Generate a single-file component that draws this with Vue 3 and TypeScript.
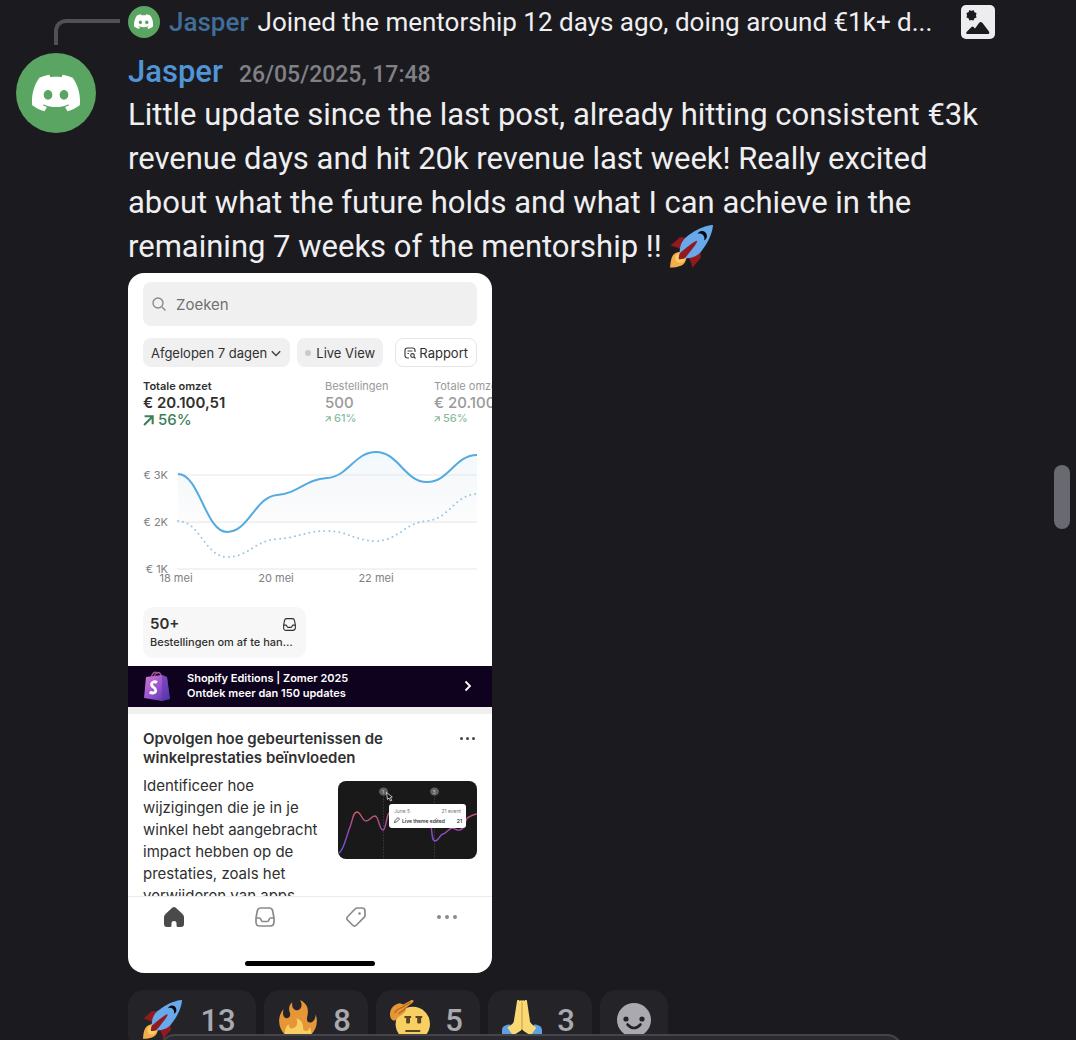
<script setup lang="ts">
interface Point { x: number; y: number; slope: number }
interface Metric { label: string; value: string; change: string; active: boolean }
interface Reaction { emoji: string; count: number; label: string }

const metrics: Metric[] = [
  { label: 'Totale omzet', value: '€ 20.100,51', change: '56%', active: true },
  { label: 'Bestellingen', value: '500', change: '61%', active: false },
  { label: 'Totale omzet', value: '€ 20.100,51', change: '56%', active: false },
]

const reactions: Reaction[] = [
  { emoji: 'rocket', count: 13, label: 'Rocket' },
  { emoji: 'fire', count: 8, label: 'Fire' },
  { emoji: 'salute', count: 5, label: 'Salute' },
  { emoji: 'pray', count: 3, label: 'Pray' },
]

const gridLines = [
  { y: 35, label: '€ 3K' },
  { y: 82, label: '€ 2K' },
  { y: 129, label: '€ 1K' },
]
const dates = [
  { x: 33, label: '18 mei' },
  { x: 133, label: '20 mei' },
  { x: 233, label: '22 mei' },
]

const current: Point[] = [
  { x: 35, y: 34, slope: 0 },
  { x: 84, y: 92, slope: 0 },
  { x: 134, y: 55, slope: -0.08 },
  { x: 184, y: 38, slope: -0.06 },
  { x: 233, y: 12, slope: 0 },
  { x: 284, y: 42, slope: 0 },
  { x: 334, y: 15, slope: 0 },
]
const previous: Point[] = [
  { x: 35, y: 81, slope: 0 },
  { x: 84, y: 117, slope: 0 },
  { x: 134, y: 99, slope: -0.06 },
  { x: 184, y: 91, slope: 0 },
  { x: 233, y: 101, slope: 0 },
  { x: 284, y: 81, slope: -0.06 },
  { x: 334, y: 54, slope: 0 },
]

function curve(points: Point[]): string {
  return points
    .map((p, i) => {
      if (i === 0) return `M${p.x} ${p.y}`
      const q = points[i - 1]
      const d = (p.x - q.x) * 0.44
      return `C${q.x + d} ${q.y + q.slope * d} ${p.x - d} ${p.y - p.slope * d} ${p.x} ${p.y}`
    })
    .join(' ')
}

const currentPath = curve(current)
const previousPath = curve(previous)
</script>

<template>
  <main class="chat">
    <svg class="symbols" aria-hidden="true">
      <symbol id="discord" viewBox="0 0 24 24">
        <path d="M20.317 4.3698a19.7913 19.7913 0 00-4.8851-1.5152.0741.0741 0 00-.0785.0371c-.211.3753-.4447.8648-.6083 1.2495-1.8447-.2762-3.68-.2762-5.4868 0-.1636-.3933-.4058-.8742-.6177-1.2495a.077.077 0 00-.0785-.037 19.7363 19.7363 0 00-4.8852 1.515.0699.0699 0 00-.0321.0277C.5334 9.0458-.319 13.5799.0992 18.0578a.0824.0824 0 00.0312.0561c2.0528 1.5076 4.0413 2.4228 5.9929 3.0294a.0777.0777 0 00.0842-.0276c.4616-.6304.8731-1.2952 1.226-1.9942a.076.076 0 00-.0416-.1057c-.6528-.2476-1.2743-.5495-1.8722-.8923a.077.077 0 01-.0076-.1277c.1258-.0943.2517-.1923.3718-.2914a.0743.0743 0 01.0776-.0105c3.9278 1.7933 8.18 1.7933 12.0614 0a.0739.0739 0 01.0785.0095c.1202.099.246.1981.3728.2924a.077.077 0 01-.0066.1276 12.2986 12.2986 0 01-1.873.8914.0766.0766 0 00-.0407.1067c.3604.698.7719 1.3628 1.225 1.9932a.076.076 0 00.0842.0286c1.961-.6067 3.9495-1.5219 6.0023-3.0294a.077.077 0 00.0313-.0552c.5004-5.177-.8382-9.6739-3.5485-13.6604a.061.061 0 00-.0312-.0286zM8.02 15.3312c-1.1825 0-2.1569-1.0857-2.1569-2.419 0-1.3332.9555-2.4189 2.157-2.4189 1.2108 0 2.1757 1.0952 2.1568 2.419 0 1.3332-.9555 2.4189-2.1569 2.4189zm7.9748 0c-1.1825 0-2.1569-1.0857-2.1569-2.419 0-1.3332.9554-2.4189 2.1569-2.4189 1.2108 0 2.1757 1.0952 2.1568 2.419 0 1.3332-.946 2.4189-2.1568 2.4189Z" />
      </symbol>
      <symbol id="rocket" viewBox="0 0 36 36">
        <path fill="#92191f" d="M1 17l8-7 16 1 1 16-7 8s.001-5.999-6-12-12-6-12-6z" />
        <path fill="#f2ae4b" d="M.973 35s-.036-7.979 2.985-11S15 21.187 15 21.187 14.999 29 11.999 32c-3 3-11.026 3-11.026 3z" />
        <circle fill="#f8cd66" cx="9" cy="27" r="4" />
        <path fill="#67a9ea" d="M35.999 0s-10 0-22 10c-6 5-6 14-4 16s11 2 16-4c10-12 10-22 10-22z" />
        <path fill="#08080a" d="M26.999 5c-1.623 0-3.013.971-3.641 2.36.502-.227 1.055-.36 1.641-.36 2.209 0 4 1.791 4 4 0 .586-.133 1.139-.359 1.64 1.389-.627 2.359-2.017 2.359-3.64 0-2.209-1.791-4-4-4z" />
        <path fill="#92191f" d="M8 28s0-4 1-5 13.001-10.999 14-10-9.001 13-10.001 14S8 28 8 28z" />
      </symbol>
      <symbol id="fire" viewBox="0 0 36 36">
        <path fill="#e79637" d="M35 19c0-2.062-.367-4.039-1.04-5.868-.46 5.389-3.333 8.157-6.335 6.868-2.812-1.208-.917-5.917-.777-8.164.236-3.809-.012-8.169-6.931-11.794 2.875 5.5.333 8.917-2.333 9.125-2.958.231-5.667-2.542-4.667-7.042-3.238 2.386-3.332 6.402-2.333 9 1.042 2.708-.042 4.958-2.583 5.208-2.84.28-4.418-3.041-2.963-8.333C2.52 10.965 1 14.805 1 19c0 9.389 7.611 17 17 17s17-7.611 17-17z" />
        <path fill="#f7cf63" d="M28.394 23.999c.148 3.084-2.561 4.293-4.019 3.709-2.106-.843-1.541-2.291-2.083-5.291s-2.625-5.083-5.708-6c2.25 6.333-1.247 8.667-3.08 9.084-1.872.426-3.753-.001-3.968-4.007C7.352 23.668 6 26.676 6 30c0 .368.023.73.055 1.09C9.125 34.124 13.342 36 18 36s8.875-1.876 11.945-4.91c.032-.36.055-.722.055-1.09 0-2.187-.584-4.236-1.606-6.001z" />
      </symbol>
      <symbol id="salute" viewBox="0 0 36 36">
        <circle fill="#f7cf63" cx="20.500" cy="21.500" r="15.500" />
        <path fill="#5a4520" d="M13 14.500h6v1.700h-1v4.300c0 1-3.500 1-3.500 0v-4.300H13zM23 14.500h6v1.700h-1v4.300c0 1-3.500 1-3.500 0v-4.300H23z" />
        <path d="M14.500 28h12" stroke="#5a4520" stroke-width="1.800" stroke-linecap="round" />
        <path fill="#e79637" d="M0 13C0 8 3 4 9 3l3 1 7-3.800c2-.8 2.800 1 1.500 2L15 6.500C14 13 9 13 5 18c-2 2-5-1-5-5z" />
        <path fill="none" stroke="#ad6322" stroke-width="1" stroke-linecap="round" d="M4.500 11.500C6 7 11 8 13 5l5-2.800M8 12c2-2 5-2 6-5" />
      </symbol>
      <symbol id="pray" viewBox="0 0 36 36">
        <path fill="#5f9fe3" d="M0 27c0-3 3-5 7-5l4 14H0zM36 27c0-3-3-5-7-5l-4 14h11z" />
        <path fill="#f9d973" d="M13.500 1c0-1.500 2-1.500 2.400 0 .5-1.200 2-1 2.100.3.100-1.300 1.600-1.500 2.100-.3.400-1.500 2.400-1.500 2.400 0 1 7 2 13 2.700 18.500 1 2.500 4 3.500 5.700 5.500l-5 7-8-5-8 5-5-7c1.700-2 4.700-3 5.700-5.500C11.500 14 12.500 8 13.500 1z" />
        <path fill="none" stroke="#d9a04a" stroke-width="1" d="M18 2v24" />
        <path fill="#26262b" d="M18 26c-1 2-4 4-4 8h8c0-4-3-6-4-8z" />
      </symbol>
      <symbol id="inbox" viewBox="0 0 20 20">
        <g fill="none" stroke="currentColor" stroke-width="1.700" stroke-linejoin="round">
          <path d="M5.500 1h9c2 0 2.800 1 3.200 3l1.300 7v4c0 3-1 4-4 4H5c-3 0-4-1-4-4v-4l1.300-7c.4-2 1.200-3 3.200-3z" />
          <path d="M1 11h3.500c1.500 0 1.500 3.500 3 3.500h5c1.500 0 1.500-3.500 3-3.500H19" />
        </g>
      </symbol>
      <symbol id="trend" viewBox="0 0 10 10">
        <path d="M1 9 8.500 1.500M1.500 1.200h7.300v7.300" fill="none" stroke="currentColor" stroke-width="1.900" />
      </symbol>
    </svg>

    <article class="message">
      <div class="reply">
        <span class="reply-spine"></span>
        <span class="avatar avatar-small"><svg><use href="#discord" /></svg></span>
        <a href="#author" class="author reply-author">Jasper</a>
        <span class="reply-text">Joined the mentorship 12 days ago, doing around €1k+ d...</span>
        <svg class="picture-icon" viewBox="0 0 34 34" role="img" aria-label="Image">
          <rect width="34" height="34" rx="5" fill="#ededef" />
          <path fill="#1b1b1f" d="M8.500 5l2 1 2-1 1 2.200 2 .8-.5 2.200.5 2.300-2 .8-1 2.200-2-.5-2 .5-1-2.200-2-.8.500-2.300-.5-2.200 2-.8zM6 29q-1.500-.5-.5-2l5-5q1-1 2 0l1.500 1.500L18 18q1.800-2 3.500 0L28 26.500q1 2-.5 2.500z" />
        </svg>
      </div>

      <div class="post">
        <span class="avatar avatar-large"><svg><use href="#discord" /></svg></span>
        <div class="content">
          <header class="heading">
            <a href="#author" class="author">Jasper</a>
            <time datetime="2025-05-26T17:48">26/05/2025, 17:48</time>
          </header>
          <p class="body">
            Little update since the last post, already hitting consistent €3k<br />
            revenue days and hit 20k revenue last week! Really excited<br />
            about what the future holds and what I can achieve in the<br />
            remaining 7 weeks of the mentorship !!
            <svg class="inline-emoji" role="img" aria-label="Rocket"><use href="#rocket" /></svg>
          </p>

          <section class="phone">
            <label class="search">
              <svg viewBox="0 0 14 14"><circle cx="6" cy="6" r="5" /><path d="m10 10 3.500 3.500" /></svg>
              <input type="search" placeholder="Zoeken" aria-label="Zoeken" />
            </label>

            <div class="filters">
              <button type="button" class="filter">
                Afgelopen 7 dagen
                <svg class="chevron" viewBox="0 0 10 10"><path d="m1.500 3.500 3.500 3.500 3.500-3.500" /></svg>
              </button>
              <button type="button" class="filter"><span class="dot"></span>Live View</button>
              <button type="button" class="filter report">
                <svg viewBox="0 0 12 12">
                  <path d="M5 11H3.500Q1 11 1 8.500v-5Q1 1 3.500 1h5Q11 1 11 3.500V5M3.500 4h5M3.500 6.500H5M10 10l1.500 1.500" />
                  <circle cx="8.500" cy="8.500" r="1.800" />
                </svg>
                Rapport
              </button>
            </div>

            <div class="metrics">
              <div v-for="(m, i) in metrics" :key="i" class="metric" :class="{ active: m.active }">
                <span class="metric-label">{{ m.label }}</span>
                <strong class="metric-value">{{ m.value }}</strong>
                <span class="metric-change"><svg><use href="#trend" /></svg>{{ m.change }}</span>
              </div>
            </div>

            <svg class="chart" viewBox="0 0 334 150" role="img" aria-label="Totale omzet per dag">
              <defs>
                <linearGradient id="area" gradientUnits="userSpaceOnUse" x1="0" y1="12" x2="0" y2="84">
                  <stop offset="0" stop-color="#f1f9fd" />
                  <stop offset="0.500" stop-color="#f8f9fb" />
                  <stop offset="1" stop-color="#fdfdfd" />
                </linearGradient>
              </defs>
              <path :d="`${currentPath} V84 H35 Z`" fill="url(#area)" />
              <g v-for="line in gridLines" :key="line.y">
                <line x1="34" x2="334" :y1="line.y" :y2="line.y" stroke="#e6e6e8" />
                <text x="25" :y="line.y + 4" text-anchor="end">{{ line.label }}</text>
              </g>
              <text v-for="d in dates" :key="d.x" :x="d.x" y="142" text-anchor="middle">{{ d.label }}</text>
              <path :d="previousPath" fill="none" stroke="#93c8e4" stroke-width="2" stroke-dasharray="0 5" stroke-linecap="round" />
              <path :d="currentPath" fill="none" stroke="#55aae0" stroke-width="2" />
            </svg>

            <a href="#orders" class="orders">
              <span class="orders-top"><strong>50+</strong><svg><use href="#inbox" /></svg></span>
              <span class="orders-text">Bestellingen om af te handelen</span>
            </a>

            <a href="#editions" class="banner">
              <svg class="bag" viewBox="0 0 26 30">
                <defs>
                  <linearGradient id="bagfill" x1="0" y1="0" x2="1" y2="1">
                    <stop offset="0" stop-color="#d279d2" />
                    <stop offset="0.500" stop-color="#9a55d0" />
                    <stop offset="1" stop-color="#4930a0" />
                  </linearGradient>
                </defs>
                <path d="M7 7C8 2 11 0 13 2c2-1 4 0 4 4M10 7c0-3 2-5 4-5" fill="none" stroke="#a05590" stroke-width="1.500" />
                <path d="m2 6 16-2 5 2 3 22-8 2L0 27z" fill="url(#bagfill)" />
                <path d="m18 4 5 2 3 22-8 2z" fill="#5636ad" opacity=".5" />
                <path d="M13 11.500c-2.500-1.500-5.500-.5-5.500 2 0 3 4.500 3 4.200 6-.2 2.800-3.500 3.200-6 1.500" fill="none" stroke="#fff" stroke-width="2.800" />
              </svg>
              <span class="banner-text">Shopify Editions | Zomer 2025<br />Ontdek meer dan 150 updates</span>
              <svg class="banner-arrow" viewBox="0 0 8 12"><path d="m1.500 1.500 4.500 4.500-4.500 4.500" /></svg>
            </a>

            <section class="news">
              <div class="news-head">
                <h2>Opvolgen hoe gebeurtenissen de winkelprestaties beïnvloeden</h2>
                <button type="button" class="more" aria-label="Meer"><i></i><i></i><i></i></button>
              </div>
              <div class="news-body">
                <p>Identificeer hoe wijzigingen die je in je winkel hebt aangebracht impact hebben op de prestaties, zoals het verwijderen van apps</p>
                <svg class="thumb" viewBox="0 0 139 78">
                  <defs>
                    <linearGradient id="line" gradientUnits="userSpaceOnUse" x1="0" y1="30" x2="0" y2="72">
                      <stop offset="0" stop-color="#d05a62" />
                      <stop offset="0.500" stop-color="#9a45b8" />
                      <stop offset="1" stop-color="#5560d8" />
                    </linearGradient>
                  </defs>
                  <rect width="139" height="78" rx="8" fill="#19191a" />
                  <path d="M45.500 14v64M96.500 14v64" stroke="#333" stroke-dasharray="2 1" />
                  <path d="M1 72C6 69 8 56 12 46c3-8 3-15 7-15 4 0 5 9 9 9s5-5 9-5 4 14 8 14c3 0 3-13 6-17" fill="none" stroke="url(#line)" stroke-width="1.400" />
                  <path d="M93 44c1 8 1 16 4 16 4 0 4-6 8-7s5-5 9-6c3 0 4 3 8 2 6-1 4-12 9-13 3-1 4-3 8-3" fill="none" stroke="url(#line)" stroke-width="1.400" />
                  <ellipse cx="45.500" cy="10.500" rx="4.500" ry="4" fill="#606062" />
                  <ellipse cx="96.500" cy="10.500" rx="4.500" ry="4" fill="#606062" />
                  <text x="45" y="13" fill="#ccc" font-size="5" text-anchor="middle">1</text>
                  <text x="96" y="13" fill="#ccc" font-size="5" text-anchor="middle">3</text>
                  <path d="m48.500 11.500 1 7 1.500-1.500 1.500 3 1.300-.7-1.500-2.800 2-.5z" fill="#111" stroke="#fff" stroke-width=".7" />
                  <rect x="51" y="23" width="77" height="24" rx="3" fill="#fff" />
                  <text x="56" y="32" fill="#777" font-size="5">June 5</text>
                  <text x="123" y="32" fill="#777" font-size="5" text-anchor="end">21 event</text>
                  <path d="m56.500 41.500.5-2 3-3 1.500 1.500-3 3z" fill="none" stroke="#333" stroke-width=".8" />
                  <text x="64" y="42" fill="#333" font-size="5" font-weight="600">Live theme edited</text>
                  <text x="124" y="42" fill="#333" font-size="5" font-weight="600" text-anchor="end">21</text>
                </svg>
              </div>
            </section>

            <nav class="tabs">
              <a href="#home" aria-label="Start" class="tab tab-active">
                <svg viewBox="0 0 20 20"><path fill="currentColor" d="M8.500.6q1.500-1.200 3 0L18 6.500q2 1.700 2 3.500v7q0 3-3 3h-3q-1.500 0-1.500-1.500V16q0-2-2.500-2t-2.500 2v2.500Q7.500 20 6 20H3q-3 0-3-3v-7q0-1.800 2-3.500z" /></svg>
              </a>
              <a href="#inbox-tab" aria-label="Bestellingen" class="tab"><svg><use href="#inbox" /></svg></a>
              <a href="#products" aria-label="Producten" class="tab">
                <svg viewBox="0 0 20 20"><path fill="none" stroke="currentColor" stroke-width="1.700" d="M11.500 1H16q3 0 3 3v4.500q0 1.200-1 2L10.500 18q-2 2-4 0l-5-5q-1.500-1.800.3-3.500L9 2q1-1 2.500-1z" /><circle cx="13.500" cy="6.500" r="1.300" fill="currentColor" /></svg>
              </a>
              <a href="#more" aria-label="Meer" class="tab"><span class="more"><i></i><i></i><i></i></span></a>
            </nav>
            <span class="home-bar"></span>
          </section>

          <div class="reactions">
            <button v-for="r in reactions" :key="r.emoji" type="button" class="reaction" :aria-label="r.label">
              <svg><use :href="`#${r.emoji}`" /></svg>
              <span class="count" :class="{ wide: r.count > 9 }">{{ r.count }}</span>
            </button>
            <button type="button" class="reaction add" aria-label="Add reaction">
              <svg viewBox="0 0 34 34">
                <circle cx="17" cy="17" r="17" fill="#a9a9af" />
                <circle cx="9" cy="16" r="2.600" fill="#232327" /><circle cx="25" cy="16" r="2.600" fill="#232327" />
                <path d="M10.500 21.500q6.500 7 13 0" fill="none" stroke="#232327" stroke-width="2.600" stroke-linecap="round" />
              </svg>
            </button>
          </div>
        </div>
      </div>
    </article>

    <span class="scrollbar"></span>
    <div class="composer"></div>
  </main>
</template>

<style>
body {
  background: #1b1b1f;
}
</style>

<style scoped>
* {
  box-sizing: border-box;
}
.chat {
  position: relative;
  height: 100vh;
  overflow: hidden;
  background: #1b1b1f;
  color: #efeff1;
  font-family: Roboto, "Noto Sans", sans-serif;
}
.symbols {
  position: absolute;
  width: 0;
  height: 0;
}
a {
  color: inherit;
  text-decoration: none;
}
button {
  border: 0;
  margin: 0;
  font: inherit;
  color: inherit;
}
.message {
  padding: 0 81px 0 16px;
}
.reply {
  display: flex;
  align-items: center;
  height: 43px;
  padding-left: 38px;
  font-size: 26px;
}
.reply-spine {
  flex: none;
  align-self: flex-end;
  width: 66px;
  height: 26px;
  margin: 0 8px -2px 0;
  border: solid #505055;
  border-width: 4px 0 0 4px;
  border-top-left-radius: 12px;
}
.avatar {
  display: flex;
  flex: none;
  align-items: center;
  justify-content: center;
  border-radius: 50%;
  background: #5aa562;
}
.avatar svg {
  width: 60%;
  height: 60%;
  fill: #fff;
}
.avatar-small {
  width: 32px;
  height: 32px;
}
.avatar-large {
  width: 80px;
  height: 80px;
  margin-top: 10px;
}
.author {
  color: #5095d8;
  font-weight: 500;
}
.reply-author {
  margin: 0 9px;
  color: #416d99;
}
.reply-text {
  flex: 1;
  overflow: hidden;
  white-space: nowrap;
}
.picture-icon {
  flex: none;
  width: 34px;
  height: 34px;
  margin-left: 10px;
}
.post {
  display: flex;
  gap: 32px;
}
.content {
  flex: 1;
  min-width: 0;
}
.heading {
  display: flex;
  align-items: baseline;
  gap: 16px;
  height: 50px;
  font-size: 31px;
  line-height: 58px;
}
time {
  color: #808087;
  font-size: 23px;
  font-weight: 500;
}
.body {
  margin: 0;
  font-size: 31px;
  line-height: 44px;
  white-space: nowrap;
}
.inline-emoji {
  width: 44px;
  height: 44px;
  vertical-align: bottom;
}
.phone {
  max-width: 364px;
  margin-top: 4px;
  padding-top: 9px;
  overflow: hidden;
  border-radius: 16px;
  background: #fff;
  color: #303030;
  font-family: Inter, "Liberation Sans", sans-serif;
}
.search {
  display: flex;
  align-items: center;
  gap: 10px;
  height: 44px;
  margin: 0 15px;
  padding: 0 9px;
  border-radius: 8px;
  background: #f0f0f0;
}
.search svg {
  width: 14px;
  height: 14px;
  fill: none;
  stroke: #8a8a8a;
  stroke-width: 1.400;
}
.search input {
  flex: 1;
  min-width: 0;
  padding: 0;
  border: 0;
  outline: 0;
  background: none;
  font: 15px Inter, sans-serif;
}
.search input::placeholder {
  color: #707070;
  opacity: 1;
}
.filters {
  display: flex;
  gap: 7px;
  margin: 12px 15px 0;
}
.filter {
  display: flex;
  align-items: center;
  gap: 3px;
  height: 29px;
  padding: 0 8px;
  border-radius: 8px;
  background: #f0f0f0;
  font-size: 13px;
  white-space: nowrap;
}
.filter svg {
  width: 12px;
  height: 12px;
  fill: none;
  stroke: #404040;
  stroke-width: 1.200;
}
.dot {
  width: 6px;
  height: 6px;
  margin-right: 2px;
  border-radius: 50%;
  background: #cacaca;
}
.report {
  margin-left: auto;
  border: 1px solid #e6e6e6;
  background: #fff;
}
.metrics {
  display: grid;
  grid-template-columns: 182px 109px auto;
  margin: 12px 0 0 15px;
  overflow: hidden;
  white-space: nowrap;
}
.metric {
  display: flex;
  flex-direction: column;
  color: #999;
}
.metric-label {
  font-size: 11px;
  line-height: 15px;
}
.metric-value {
  font-size: 15px;
  font-weight: 500;
  line-height: 18px;
}
.metric-change {
  display: flex;
  align-items: center;
  gap: 3px;
  color: #8dbba3;
  font-size: 11px;
  font-weight: 500;
  line-height: 13px;
}
.metric-change svg {
  width: 6px;
  height: 6px;
}
.active {
  color: #303030;
}
.active .metric-label,
.active .metric-value {
  font-weight: 600;
}
.active .metric-change {
  gap: 4px;
  color: #3a8058;
  font-size: 15px;
  line-height: 16px;
}
.active .metric-change svg {
  width: 11px;
  height: 11px;
}
.chart {
  display: block;
  width: calc(100% - 30px);
  margin: 12px 15px 0;
}
.chart text {
  fill: #808086;
  font-size: 11px;
}
.orders {
  display: flex;
  flex-direction: column;
  width: 163px;
  margin: 17px 15px 8px;
  padding: 8px 8px 6px 7px;
  border-radius: 10px;
  background: #f7f7f7;
}
.orders-top {
  display: flex;
  align-items: center;
  justify-content: space-between;
  padding-right: 2px;
  font-size: 15px;
  line-height: 18px;
}
.orders-top strong {
  font-weight: 600;
}
.orders-top svg {
  width: 13px;
  height: 13px;
}
.orders-text {
  overflow: hidden;
  font-size: 11px;
  font-weight: 500;
  line-height: 19px;
  text-overflow: ellipsis;
  white-space: nowrap;
}
.banner {
  display: flex;
  align-items: center;
  height: 41px;
  padding: 0 20px 1px 16px;
  background: #0e021e;
  color: #fff;
  font-size: 11px;
  font-weight: 600;
  line-height: 15px;
}
.bag {
  width: 26px;
  height: 30px;
}
.banner-text {
  flex: 1;
  margin-left: 17px;
}
.banner-arrow {
  width: 8px;
  height: 12px;
  fill: none;
  stroke: #fff;
  stroke-width: 1.800;
}
.news {
  height: 189px;
  padding: 15px 15px 0;
  overflow: hidden;
  border-top: 7px solid #f0f0f0;
}
.news-head {
  display: flex;
  align-items: flex-start;
  justify-content: space-between;
}
h2 {
  max-width: 260px;
  margin: 0;
  font-size: 15px;
  font-weight: 600;
  line-height: 19px;
}
.more {
  display: flex;
  gap: 3px;
  padding: 0;
  background: none;
}
.more i {
  width: 3px;
  height: 3px;
  border-radius: 50%;
  background: #444;
}
.news-head .more {
  padding: 8px 2px;
}
.news-body {
  display: flex;
  align-items: flex-start;
  justify-content: space-between;
  margin-top: 8px;
}
.news-body p {
  width: 180px;
  margin: 0;
  font-size: 15px;
  line-height: 22px;
}
.thumb {
  width: 139px;
  height: 78px;
  margin-top: 6px;
}
.tabs {
  display: flex;
  height: 65px;
  border-top: 1px solid #ebebeb;
}
.tab {
  display: flex;
  flex: 1;
  align-items: center;
  justify-content: center;
  height: 39px;
  color: #8a8a8a;
}
.tab svg {
  width: 20px;
  height: 20px;
}
.tab-active {
  color: #4a4a4a;
}
.tab .more {
  gap: 4px;
}
.tab .more i {
  width: 4px;
  height: 4px;
  background: #8a8a8a;
}
.home-bar {
  display: block;
  width: 130px;
  height: 5px;
  margin: 0 auto 7px;
  border-radius: 3px;
  background: #000;
}
.reactions {
  display: flex;
  gap: 8px;
  margin-top: 17px;
}
.reaction {
  display: flex;
  align-items: center;
  height: 60px;
  padding: 0 2px 0 14px;
  border-radius: 16px;
  background: #242428;
  color: #a9a9af;
  font-size: 31px;
  font-weight: 500;
}
.reaction svg {
  width: 40px;
  height: 40px;
}
.count {
  width: 48px;
  text-align: center;
}
.count.wide {
  width: 72px;
}
.reaction.add {
  padding: 0 17px;
}
.add svg {
  width: 34px;
  height: 34px;
}
.scrollbar {
  position: absolute;
  top: 465px;
  right: 6px;
  width: 16px;
  height: 64px;
  border-radius: 8px;
  background: #696972;
}
.composer {
  position: absolute;
  right: 173px;
  bottom: -38px;
  left: 159px;
  height: 44px;
  border: 2px solid #444449;
  border-radius: 16px;
  background: #2a2a30;
}
</style>
